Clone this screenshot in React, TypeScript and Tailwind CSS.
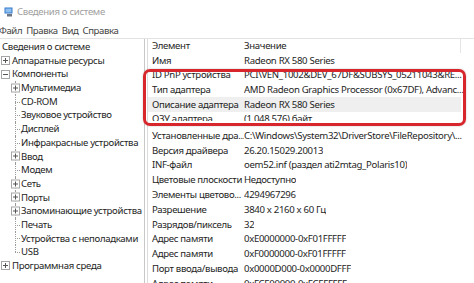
import { ReactNode } from "react";

type Node = { label: string; level: 0 | 1; box?: "plus" | "minus"; last?: boolean };

const tree: Node[] = [
  { label: "Сведения о системе", level: 0 },
  { label: "Аппаратные ресурсы", level: 0, box: "plus" },
  { label: "Компоненты", level: 0, box: "minus" },
  { label: "Мультимедиа", level: 1, box: "plus" },
  { label: "CD-ROM", level: 1 },
  { label: "Звуковое устройство", level: 1 },
  { label: "Дисплей", level: 1 },
  { label: "Инфракрасные устройства", level: 1 },
  { label: "Ввод", level: 1, box: "plus" },
  { label: "Модем", level: 1 },
  { label: "Сеть", level: 1, box: "plus" },
  { label: "Порты", level: 1, box: "plus" },
  { label: "Запоминающие устройства", level: 1, box: "plus" },
  { label: "Печать", level: 1 },
  { label: "Устройства с неполадками", level: 1 },
  { label: "USB", level: 1, last: true },
  { label: "Программная среда", level: 0, box: "plus" },
];

const lower: [string, string][] = [
  ["Установленные дра...", "C:\\Windows\\System32\\DriverStore\\FileRepository\\..."],
  ["Версия драйвера", "26.20.15029.20013"],
  ["INF-файл", "oem52.inf (раздел ati2mtag_Polaris10)"],
  ["Цветовые плоскости", "Недоступно"],
  ["Элементы цветово...", "4294967296"],
  ["Разрешение", "3840 x 2160 x 60 Гц"],
  ["Разрядов/пиксель", "32"],
  ["Адрес памяти", "0xE0000000-0xF01FFFFF"],
  ["Адрес памяти", "0xF0000000-0xF01FFFFF"],
  ["Порт ввода/вывода", "0x0000D000-0x0000DFFF"],
  ["Адрес памяти", "0xFCE00000-0xFCEFFFFF"],
];

function Box({ minus }: { minus?: boolean }) {
  return (
    <span className="relative flex h-[9px] w-[9px] items-center justify-center border border-[#a6a6a6] bg-white">
      <span className="absolute h-px w-[5px] bg-[#555]" />
      {!minus && <span className="absolute h-[5px] w-px bg-[#555]" />}
    </span>
  );
}

function TreeRow({ n }: { n: Node }) {
  if (n.level === 0) {
    return (
      <div className="flex h-[13.7px] items-center whitespace-nowrap">
        {n.box ? (
          <div className="flex w-[12px] shrink-0 items-center pl-[1px]">
            <Box minus={n.box === "minus"} />
          </div>
        ) : (
          <div className="w-[2px] shrink-0" />
        )}
        <span>{n.label}</span>
      </div>
    );
  }
  return (
    <div className="flex h-[13.7px] items-center whitespace-nowrap">
      <div className="relative h-full w-[21px] shrink-0">
        <span
          className={`absolute left-[15px] top-0 border-l border-dotted border-[#9a9a9a] ${n.last ? "h-1/2" : "h-full"}`}
        />
        {n.box ? (
          <span className="absolute left-[11px] top-1/2 -translate-y-1/2">
            <Box />
          </span>
        ) : (
          <span className="absolute left-[15px] top-1/2 w-[5px] border-t border-dotted border-[#9a9a9a]" />
        )}
      </div>
      <span>{n.label}</span>
    </div>
  );
}

function Row({ k, v, className = "", children }: { k: string; v: string; className?: string; children?: ReactNode }) {
  return (
    <div className={`flex h-[14.8px] items-center whitespace-nowrap leading-[13px] ${className}`}>
      <div className="w-[96px] shrink-0 overflow-hidden pl-[4px]">{k}</div>
      <div className="overflow-hidden">{v}</div>
      {children}
    </div>
  );
}

export default function App() {
  return (
    <div
      className="relative h-[283px] w-[474px] overflow-hidden bg-white text-[9.6px] leading-none tracking-[-0.32px] text-[#1e1e1e]"
      style={{ fontFamily: '"Noto Sans", "Liberation Sans", sans-serif' }}
    >
      {/* title bar */}
      <div className="flex h-[23px] items-center gap-[3px] pl-[4px] text-[#a0a0a0]">
        <svg width="10" height="10" viewBox="0 0 10 10">
          <rect x="0.5" y="0.5" width="8" height="6" fill="#3a78c9" />
          <rect x="1.5" y="1.5" width="6" height="4" fill="#8cc0ef" />
          <rect x="3" y="7" width="5" height="2.5" fill="#6b7785" />
        </svg>
        <span>Сведения о системе</span>
      </div>

      {/* menu */}
      <div className="flex h-[15px] items-center gap-[4px] tracking-[-0.4px] text-[#444]">
        <span className="-ml-[1px]">Файл</span>
        <span>Правка</span>
        <span>Вид</span>
        <span>Справка</span>
      </div>

      <div className="flex h-[245px] border-t border-[#e3e3e3]">
        {/* tree */}
        <div className="w-[145px] shrink-0 border-r border-[#c8c8c8] pt-[1px]">
          {tree.map((n, i) => (
            <TreeRow key={i} n={n} />
          ))}
        </div>

        {/* list */}
        <div className="ml-[2px] flex-1 border-l border-[#dcdcdc]">
          <div className="flex h-[14px] items-center whitespace-nowrap">
            <div className="w-[96px] shrink-0 pl-[4px]">Элемент</div>
            <div className="flex-1">Значение</div>
            <div className="mr-[13px] h-full border-r border-[#e5e5e5]" />
          </div>
          <Row k="Имя" v="Radeon RX 580 Series" />
          <div className="flex h-[14.6px] items-end whitespace-nowrap">
            <div className="flex h-[10px] w-full items-end overflow-hidden">
              <div className="w-[96px] shrink-0 pl-[4px] leading-[14px]">ID PnP устройства</div>
              <div className="leading-[14px]">PCI\VEN_1002&amp;DEV_67DF&amp;SUBSYS_05211043&amp;RE...</div>
            </div>
          </div>
          <Row k="Тип адаптера" v="AMD Radeon Graphics Processor (0x67DF), Advanc..." />
          <Row k="Описание адаптера" v="Radeon RX 580 Series" className="mr-[13px] bg-[#efefef]" />
          <div className="flex h-[16px] items-start whitespace-nowrap">
            <div className="flex h-[9px] w-full items-start overflow-hidden">
              <div className="w-[96px] shrink-0 pl-[4px] leading-[14px]">ОЗУ адаптера</div>
              <div className="leading-[14px]">(1 048 576) байт</div>
            </div>
          </div>
          {lower.map(([k, v], i) => (
            <Row key={i} k={k} v={v} />
          ))}
        </div>
      </div>

      {/* red highlight */}
      <div className="absolute left-[143px] top-[69px] h-[57px] w-[323px] rounded-[7px] border-[3px] border-[#d7262c] shadow-[0_0_2px_rgba(0,0,0,0.25)]" />
    </div>
  );
}
